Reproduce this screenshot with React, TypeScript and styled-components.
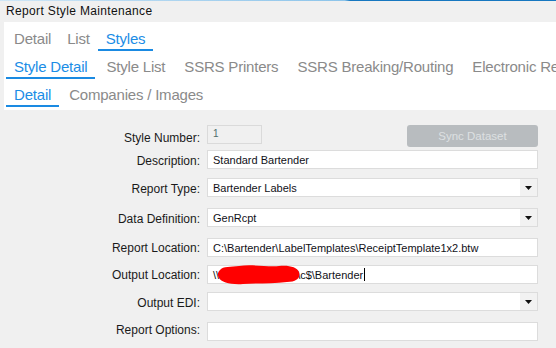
import React from "react";
import styled, { createGlobalStyle } from "styled-components";

const Global = createGlobalStyle`
  html, body { margin: 0; padding: 0; background: #f0f0f0; }
  body {
    width: 556px; height: 348px; overflow: hidden;
    font-family: "Liberation Sans", Arial, sans-serif;
  }
`;

const Window = styled.div`
  width: 556px;
  height: 348px;
  background: #f0f0f0;
  overflow: hidden;
`;

const TopLine = styled.div`
  height: 1px;
  background: linear-gradient(to right, #cfe6f6 0, #8cc4ea 62%, #1677c0 63%, #1677c0 100%);
`;

const TitleBar = styled.div`
  height: 21px;
  line-height: 21px;
  padding-left: 6px;
  font-size: 12px;
  letter-spacing: 0.35px;
  color: #111;
`;

const TabPanel = styled.div`
  margin-left: 4px;
  background: #fff;
  padding: 1px 0 3px 2px;
  overflow: hidden;
`;

const TabRow = styled.div<{ $gap: number }>`
  display: flex;
  gap: ${(p) => p.$gap}px;
  height: 28px;
  white-space: nowrap;
`;

const Tab = styled.div<{ $active?: boolean }>`
  box-sizing: border-box;
  height: 28px;
  padding: 7px 8px 0;
  line-height: 17px;
  font-size: 15px;
  letter-spacing: -0.2px;
  flex: none;
  color: ${(p) => (p.$active ? "#1b8de6" : "#8a8a8a")};
  border-bottom: 2px solid ${(p) => (p.$active ? "#1a8ae2" : "transparent")};
`;

const Form = styled.div`
  padding: 15px 18px 0 0;
`;

const Row = styled.div<{ $mt: number }>`
  display: grid;
  grid-template-columns: 200px 1fr;
  column-gap: 7px;
  align-items: start;
  margin-top: ${(p) => p.$mt}px;
`;

const Label = styled.div<{ $dy: number }>`
  text-align: right;
  font-size: 12px;
  line-height: 19px;
  color: #1a1a1a;
  margin-top: ${(p) => p.$dy}px;
  white-space: nowrap;
`;

const Cell = styled.div`
  display: flex;
  justify-content: space-between;
  align-items: flex-start;
`;

const Field = styled.div<{ $disabled?: boolean }>`
  position: relative;
  box-sizing: border-box;
  height: 19px;
  flex: 1;
  display: flex;
  border: 1px solid ${(p) => (p.$disabled ? "#dadada" : "#dcdcdc")};
  background: ${(p) => (p.$disabled ? "#f0f0f0" : "#fff")};
  ${(p) => (p.$disabled ? "flex: none; width: 55px;" : "")}
`;

const FieldText = styled.div<{ $disabled?: boolean }>`
  flex: 1;
  padding: ${(p) => (p.$disabled ? "0 5px" : "2px 5px 0")};
  font-size: ${(p) => (p.$disabled ? "10px" : "11px")};
  line-height: 15px;
  color: ${(p) => (p.$disabled ? "#4f6d6a" : "#111118")};
  white-space: nowrap;
  overflow: visible;
`;

const ArrowBox = styled.div`
  width: 17px;
  flex: none;
  background: #f2f2f2;
  display: flex;
  align-items: center;
  justify-content: center;
`;

const SyncButton = styled.div`
  width: 131px;
  height: 22px;
  box-sizing: border-box;
  border-radius: 3px;
  background: #b8bcbf;
  color: #dde0e2;
  font-size: 11.5px;
  line-height: 22px;
  text-align: center;
`;

const Hidden = styled.span`
  display: inline-block;
  width: 78px;
`;

const Redaction = styled.svg`
  position: absolute;
  left: 9px;
  top: -2px;
  width: 84px;
  height: 21px;
  overflow: visible;
`;

const Caret = styled.span`
  display: inline-block;
  width: 1px;
  height: 13px;
  background: #000;
  margin-left: 1px;
  vertical-align: -2px;
`;

const Arrow = () => (
  <svg width="7" height="4" viewBox="0 0 7 4">
    <polygon points="0,0 7,0 3.5,4" fill="#111" />
  </svg>
);

const TextRow = ({ label, dy, mt, value }: { label: string; dy: number; mt: number; value: string }) => (
  <Row $mt={mt}>
    <Label $dy={dy}>{label}</Label>
    <Cell>
      <Field>
        <FieldText>{value}</FieldText>
      </Field>
    </Cell>
  </Row>
);

const SelectRow = ({ label, dy, mt, value }: { label: string; dy: number; mt: number; value: string }) => (
  <Row $mt={mt}>
    <Label $dy={dy}>{label}</Label>
    <Cell>
      <Field>
        <FieldText>{value}</FieldText>
        <ArrowBox>
          <Arrow />
        </ArrowBox>
      </Field>
    </Cell>
  </Row>
);

export default function App() {
  return (
    <Window>
      <Global />
      <TopLine />
      <TitleBar>Report Style Maintenance</TitleBar>
      <TabPanel>
        <TabRow $gap={0}>
          <Tab>Detail</Tab>
          <Tab>List</Tab>
          <Tab $active>Styles</Tab>
        </TabRow>
        <TabRow $gap={3}>
          <Tab $active>Style Detail</Tab>
          <Tab>Style List</Tab>
          <Tab>SSRS Printers</Tab>
          <Tab>SSRS Breaking/Routing</Tab>
          <Tab>Electronic Reporting</Tab>
        </TabRow>
        <TabRow $gap={2}>
          <Tab $active>Detail</Tab>
          <Tab>Companies / Images</Tab>
        </TabRow>
      </TabPanel>
      <Form>
        <Row $mt={0}>
          <Label $dy={4}>Style Number:</Label>
          <Cell>
            <Field $disabled>
              <FieldText $disabled>1</FieldText>
            </Field>
            <SyncButton>Sync Dataset</SyncButton>
          </Cell>
        </Row>
        <TextRow label="Description:" dy={2} mt={2} value="Standard Bartender" />
        <SelectRow label="Report Type:" dy={2} mt={7} value="Bartender Labels" />
        <SelectRow label="Data Definition:" dy={2} mt={9} value="GenRcpt" />
        <TextRow
          label="Report Location:"
          dy={1}
          mt={9}
          value={"C:\\Bartender\\LabelTemplates\\ReceiptTemplate1x2.btw"}
        />
        <Row $mt={7}>
          <Label $dy={1}>Output Location:</Label>
          <Cell>
            <Field>
              <FieldText>
                {"\\\\"}
                <Hidden />
                {"\\c$\\Bartender"}
                <Caret />
              </FieldText>
              <Redaction viewBox="0 0 84 21">
                <path
                  d="M3 6 C6 2 14 3 22 2 C34 0 50 3 62 2 C72 1 80 3 82 8 C84 13 80 18 70 18 C56 20 40 19 26 20 C14 21 4 18 2 14 C0 11 1 8 3 6 Z"
                  fill="#ff0000"
                />
              </Redaction>
            </Field>
          </Cell>
        </Row>
        <SelectRow label="Output EDI:" dy={2} mt={7} value="" />
        <TextRow label="Report Options:" dy={-1} mt={9} value="" />
      </Form>
    </Window>
  );
}
